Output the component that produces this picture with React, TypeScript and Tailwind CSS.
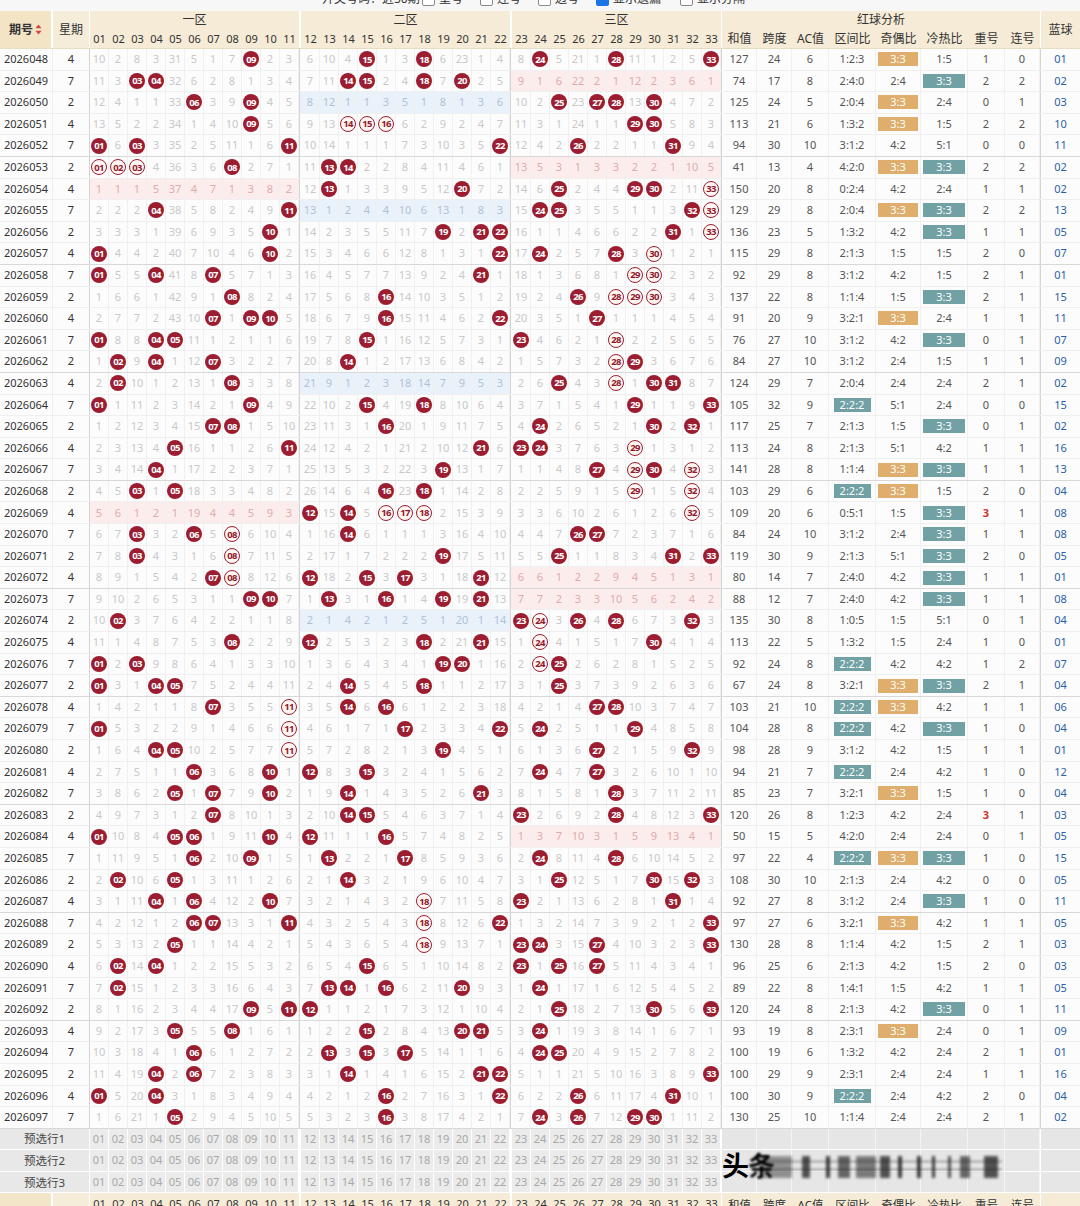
import React from 'react';

const INIT = [10, 2, 8, 3, 31, 5, 1, 7, 0, 2, 3, 6, 10, 4, 0, 1, 3, 0, 6, 23, 1, 4, 8, 0, 5, 21, 1, 0, 11, 1, 2, 5, 0];

const DRAWS: string[] = [
  '09 15 18 24 28 33',
  '03 04 14 15 18 20',
  '06 09 25 27 28 30',
  '09 14o 15o 16o 29 30',
  '01 03 11 22 26 31',
  '01o 02o 03o 08 13 14',
  '13 20 25 29 30 33o',
  '04 11 24 25 32 33o',
  '10 19 21 22 31 33o',
  '01 10 22 24 28 30o',
  '01 04 07 21 29o 30o',
  '08 16 26 28o 29o 30o',
  '07 09 10 16 22 27',
  '01 04 05 15 23 28o',
  '02 04 07 14 28o 29',
  '02 08 25 28o 30 31',
  '01 09 15 18 29 33',
  '07 08 16 24 30 32',
  '05 11 21 23 24 29o',
  '04 19 27 29o 30 32o',
  '03 05 16 18 29o 32o',
  '12 14 16o 17o 18o 32o',
  '03 06 08o 14 26 27',
  '03 08o 19 25 31 33',
  '07 08o 12 15 17 21',
  '09 10 13 16 19 21',
  '02 23 24o 26 28 32',
  '08 12 18 21 24o 30',
  '01 03 19 20 24o 25',
  '01 04 05 14 18 25',
  '07 11o 14 16 27 28',
  '01 11o 17 22 24 29',
  '04 05 11o 19 27 32',
  '06 10 12 15 24 27',
  '05 07 10 14 21 28',
  '07 14 15 23 28 33',
  '01 05 06 10 12 16',
  '06 09 13 17 24 28',
  '02 05 14 25 30 32',
  '04 06 10 18o 23 31',
  '06 07 11 18o 22 33',
  '05 18o 23 24 27 33',
  '02 04 15 23 25 27',
  '02 13 14 16 20 24',
  '09 11 12 25 30 33',
  '05 08 15 20 21 24',
  '06 13 15 17 24 25',
  '04 06 14 21 22 33',
  '01 04 16 22 26 31',
  '05 16 24 26 29 30',
];

const ANA: string[] = [
  '127 24 6 1:2:3 3:3 1:5 1 0 01',
  '74 17 8 2:4:0 2:4 3:3 2 2 02',
  '125 24 5 2:0:4 3:3 2:4 0 1 03',
  '113 21 6 1:3:2 3:3 1:5 2 2 10',
  '94 30 10 3:1:2 4:2 5:1 0 0 11',
  '41 13 4 4:2:0 3:3 3:3 2 2 02',
  '150 20 8 0:2:4 4:2 2:4 1 1 02',
  '129 29 8 2:0:4 3:3 3:3 2 2 13',
  '136 23 5 1:3:2 4:2 3:3 1 1 05',
  '115 29 8 2:1:3 1:5 1:5 2 0 07',
  '92 29 8 3:1:2 4:2 1:5 2 1 01',
  '137 22 8 1:1:4 1:5 3:3 2 1 15',
  '91 20 9 3:2:1 3:3 2:4 1 1 11',
  '76 27 10 3:1:2 4:2 3:3 0 1 07',
  '84 27 10 3:1:2 2:4 1:5 1 1 09',
  '124 29 7 2:0:4 2:4 2:4 2 1 02',
  '105 32 9 2:2:2 5:1 2:4 0 0 15',
  '117 25 7 2:1:3 1:5 3:3 0 1 02',
  '113 24 8 2:1:3 5:1 4:2 1 1 16',
  '141 28 8 1:1:4 3:3 3:3 1 1 13',
  '103 29 6 2:2:2 3:3 1:5 2 0 04',
  '109 20 6 0:5:1 1:5 3:3 3 1 08',
  '84 24 10 3:1:2 2:4 3:3 1 1 08',
  '119 30 9 2:1:3 5:1 3:3 2 0 05',
  '80 14 7 2:4:0 4:2 3:3 1 1 01',
  '88 12 7 2:4:0 4:2 3:3 1 1 08',
  '135 30 8 1:0:5 1:5 5:1 0 1 04',
  '113 22 5 1:3:2 1:5 2:4 1 0 01',
  '92 24 8 2:2:2 4:2 4:2 1 2 07',
  '67 24 8 3:2:1 3:3 3:3 2 1 04',
  '103 21 10 2:2:2 3:3 4:2 1 1 06',
  '104 28 8 2:2:2 4:2 3:3 1 0 04',
  '98 28 9 3:1:2 4:2 1:5 1 1 01',
  '94 21 7 2:2:2 2:4 4:2 1 0 12',
  '85 23 7 3:2:1 3:3 1:5 1 0 04',
  '120 26 8 1:2:3 4:2 2:4 3 1 03',
  '50 15 5 4:2:0 2:4 2:4 0 1 05',
  '97 22 4 2:2:2 3:3 3:3 1 0 15',
  '108 30 10 2:1:3 2:4 4:2 0 0 05',
  '92 27 8 3:1:2 2:4 3:3 1 0 11',
  '97 27 6 3:2:1 3:3 4:2 1 1 05',
  '130 28 8 1:1:4 4:2 1:5 2 1 03',
  '96 25 6 2:1:3 4:2 1:5 2 0 03',
  '89 22 8 1:4:1 1:5 4:2 1 1 05',
  '120 24 8 2:1:3 4:2 3:3 0 1 11',
  '93 19 8 2:3:1 3:3 2:4 0 1 09',
  '100 19 6 1:3:2 4:2 2:4 2 1 01',
  '100 29 9 2:3:1 2:4 2:4 1 1 16',
  '100 30 9 2:2:2 2:4 4:2 2 0 04',
  '130 25 10 1:1:4 2:4 2:4 2 1 02',
];

const WEEK = [4, 7, 2];
const ZONES = [
  [1, 2, 3, 4, 5, 6, 7, 8, 9, 10, 11],
  [12, 13, 14, 15, 16, 17, 18, 19, 20, 21, 22],
  [23, 24, 25, 26, 27, 28, 29, 30, 31, 32, 33],
];
const AW = ['w-[35px]', 'w-[35px]', 'w-[37px]', 'w-[47px]', 'w-[45px]', 'w-[47px]', 'w-[37px]', 'w-[35px]'];
const ALABELS = ['和值', '跨度', 'AC值', '区间比', '奇偶比', '冷热比', '重号', '连号'];

const pad = (n: number) => String(n).padStart(2, '0');

type Row = {
  issue: string;
  wk: number;
  balls: Set<number>;
  outl: Set<number>;
  om: number[];
  ana: string[];
};

function buildRows(): Row[] {
  const rows: Row[] = [];
  let prev = INIT;
  DRAWS.forEach((d, i) => {
    const balls = new Set<number>();
    const outl = new Set<number>();
    d.split(' ').forEach((t) => {
      const n = parseInt(t, 10);
      balls.add(n);
      if (t.endsWith('o')) outl.add(n);
    });
    const om = i === 0 ? INIT.slice() : prev.map((v, j) => (balls.has(j + 1) ? 0 : v + 1));
    prev = om;
    rows.push({ issue: String(2026048 + i), wk: WEEK[i % 3], balls, outl, om, ana: ANA[i].split(' ') });
  });
  return rows;
}

function Ball({ n, outline }: { n: number; outline: boolean }) {
  if (outline) {
    return (
      <span className="flex h-[16px] w-[16px] items-center justify-center rounded-full border border-[#9b1d2f] bg-[#fff5f3] text-[9.5px] font-bold leading-none tracking-[-0.6px] text-[#8f1a2b]">
        {pad(n)}
      </span>
    );
  }
  return (
    <span className="flex h-[16px] w-[16px] items-center justify-center rounded-full bg-[#9b1d2f] text-[9.5px] font-bold leading-none tracking-[-0.6px] text-white">
      {pad(n)}
    </span>
  );
}

function SortIcon() {
  return (
    <svg width="7" height="11" viewBox="0 0 7 11" className="ml-[2px]">
      <path d="M3.5 0.5 L6.5 4.2 L0.5 4.2 Z" fill="#d2453b" />
      <path d="M3.5 10.5 L6.5 6.8 L0.5 6.8 Z" fill="#d2453b" />
    </svg>
  );
}

function Checkbox({ checked, label, w }: { checked?: boolean; label: string; w: string }) {
  return (
    <div className={`flex items-center ${w}`}>
      {checked ? (
        <span className="h-[13px] w-[13px] rounded-[2px] bg-[#1a73e8]" />
      ) : (
        <span className="h-[13px] w-[13px] rounded-[2px] border border-[#8a8a8a] bg-white" />
      )}
      <span className="ml-[4px] text-[12px] text-[#333]">{label}</span>
    </div>
  );
}

function ZoneCells({ row, zi }: { row: Row; zi: number }) {
  const nums = ZONES[zi];
  const empty = nums.every((n) => !row.balls.has(n));
  let shade = 'text-[#c9c9c9]';
  if (empty) shade = zi === 1 ? 'bg-[#e9f1fb] text-[#b1c1d6]' : 'bg-[#fcecec] text-[#dcadad]';
  const wrap = zi === 0 ? 'border-l border-[#d3d3d3]' : 'border-l border-[#d3d3d3] pl-[1px]';
  return (
    <div className={`flex ${wrap} ${shade}`}>
      {nums.map((n) => (
        <div key={n} className="flex w-[19px] items-center justify-center border-r border-[#f0f0f0] text-[11px]">
          {row.balls.has(n) ? <Ball n={n} outline={row.outl.has(n)} /> : row.om[n - 1]}
        </div>
      ))}
    </div>
  );
}

function AnaCell({ k, v }: { k: number; v: string }) {
  let content: React.ReactNode = v;
  if (k === 3 && v === '2:2:2') {
    content = <span className="flex h-[14px] w-[37px] items-center justify-center bg-[#72a1a5] text-[11px] text-white">{v}</span>;
  } else if (k === 4 && v === '3:3') {
    content = <span className="flex h-[14px] w-[40px] items-center justify-center bg-[#dfae6c] text-[11px] text-white">{v}</span>;
  } else if (k === 5 && v === '3:3') {
    content = <span className="flex h-[14px] w-[42px] items-center justify-center bg-[#72a1a5] text-[11px] text-white">{v}</span>;
  } else if (k === 6 && v === '3') {
    content = <span className="font-bold text-[#d0302f]">{v}</span>;
  }
  return (
    <div className={`flex ${AW[k]} items-center justify-center border-r border-[#f0f0f0] text-[11px] text-[#555]`}>
      {content}
    </div>
  );
}

function BodyRow({ row, sep }: { row: Row; sep: boolean }) {
  const a = row.ana;
  return (
    <div className={`flex h-[21.6px] bg-[#fcfcfc] ${sep ? 'border-b border-[#d8d8d8]' : 'border-b border-[#efefef]'}`}>
      <div className="flex w-[53px] items-center justify-center border-r border-[#efefef] text-[11px] text-[#333]">{row.issue}</div>
      <div className="flex w-[36px] items-center justify-center text-[11px] text-[#333]">{row.wk}</div>
      <ZoneCells row={row} zi={0} />
      <ZoneCells row={row} zi={1} />
      <ZoneCells row={row} zi={2} />
      <div className="flex border-l border-[#d3d3d3]">
        {[0, 1, 2, 3, 4, 5, 6, 7].map((k) => (
          <AnaCell key={k} k={k} v={a[k]} />
        ))}
      </div>
      <div className="flex w-[40px] items-center justify-center border-l border-[#d3d3d3] text-[11px] text-[#2b5ea7]">{a[8]}</div>
    </div>
  );
}

function HeaderZone({ zi, title }: { zi: number; title: string }) {
  const wrap = zi === 0 ? 'border-l border-white' : 'border-l-2 border-white';
  return (
    <div className={`flex flex-col ${wrap}`}>
      <div className="flex h-[19px] w-[209px] items-center justify-center bg-[#f5ebd6] text-[12px] text-[#333]">{title}</div>
      <div className="flex h-[19px] bg-[#f5ebd6]">
        {ZONES[zi].map((n) => (
          <div key={n} className="flex w-[19px] items-center justify-center text-[11px] text-[#333]">
            {pad(n)}
          </div>
        ))}
      </div>
    </div>
  );
}

function FooterRow({ label }: { label: string }) {
  return (
    <div className="flex h-[21.6px] border-b border-white bg-[#ebebeb]">
      <div className="flex w-[89px] items-center justify-center bg-[#e8e8e8] text-[11.5px] text-[#444]">{label}</div>
      {[0, 1, 2].map((zi) => (
        <div key={zi} className={`flex ${zi === 0 ? 'border-l border-white' : 'border-l-2 border-white'}`}>
          {ZONES[zi].map((n) => (
            <div key={n} className="flex w-[19px] items-center justify-center border-r border-white text-[11px] text-[#a8a8a8]">
              {pad(n)}
            </div>
          ))}
        </div>
      ))}
      <div className="flex border-l border-white">
        {AW.map((w, k) => (
          <div key={k} className={`${w} border-r border-[#f4f4f4] bg-[#e6e6e6]`} />
        ))}
      </div>
      <div className="w-[40px] border-l border-white bg-[#e6e6e6]" />
    </div>
  );
}

function BottomHeader() {
  return (
    <div className="flex h-[21.6px] bg-white">
      <div className="w-[53px] border-r-2 border-white bg-[#f3e5c8]" />
      <div className="w-[36px] bg-[#f5ecda]" />
      {[0, 1, 2].map((zi) => (
        <div key={zi} className={`flex bg-[#f5ebd6] ${zi === 0 ? 'border-l border-white' : 'border-l-2 border-white'}`}>
          {ZONES[zi].map((n) => (
            <div key={n} className="flex w-[19px] items-center justify-center text-[11px] text-[#333]">
              {pad(n)}
            </div>
          ))}
        </div>
      ))}
      <div className="flex border-l border-white bg-[#f5ebd6]">
        {AW.map((w, k) => (
          <div key={k} className={`flex ${w} items-center justify-center text-[11.5px] text-[#333]`}>
            {ALABELS[k]}
          </div>
        ))}
      </div>
      <div className="w-[40px] border-l border-white bg-[#f5ebd6]" />
    </div>
  );
}

function Watermark() {
  const bars: [string, string, string][] = [
    ['left-[40px]', 'w-[30px]', 'opacity-40'],
    ['left-[80px]', 'w-[8px]', 'opacity-70'],
    ['left-[104px]', 'w-[4px]', 'opacity-80'],
    ['left-[116px]', 'w-[12px]', 'opacity-60'],
    ['left-[134px]', 'w-[20px]', 'opacity-50'],
    ['left-[158px]', 'w-[10px]', 'opacity-70'],
    ['left-[176px]', 'w-[4px]', 'opacity-80'],
    ['left-[195px]', 'w-[4px]', 'opacity-80'],
    ['left-[210px]', 'w-[3px]', 'opacity-80'],
    ['left-[226px]', 'w-[3px]', 'opacity-70'],
    ['left-[238px]', 'w-[10px]', 'opacity-60'],
    ['left-[262px]', 'w-[14px]', 'opacity-70'],
  ];
  return (
    <div className="pointer-events-none absolute left-[722px] top-[1150px] h-[34px] w-[290px]">
      <div className="absolute left-[40px] top-[10px] h-[3px] w-[240px] bg-[#555] opacity-30 blur-[1px]" />
      <div className="absolute left-[40px] top-[18px] h-[3px] w-[240px] bg-[#555] opacity-30 blur-[1px]" />
      <span className="absolute left-0 top-0 text-[27px] font-bold leading-[32px] text-black">头</span>
      <span className="absolute left-[26px] top-0 text-[27px] font-bold leading-[32px] text-black blur-[1px]">条</span>
      {bars.map(([l, w, o], i) => (
        <div key={i} className={`absolute top-[6px] h-[22px] ${l} ${w} ${o} bg-[#111] blur-[1.5px]`} />
      ))}
    </div>
  );
}

export default function App() {
  const rows = buildRows();
  return (
    <div className="relative w-[1080px] bg-white font-['Noto_Sans','Noto_Sans_CJK_SC',sans-serif]">
      {/* toolbar (cut off at the top edge) */}
      <div className="h-[11px] overflow-hidden bg-[#f7f7f7]">
        <div className="-mt-[10px] flex h-[18px] items-center pl-[322px]">
          <span className="w-[100px] text-[12px] text-[#333]">开奖号码：近50期</span>
          <Checkbox label="重号" w="w-[58px]" />
          <Checkbox label="连号" w="w-[58px]" />
          <Checkbox label="边号" w="w-[58px]" />
          <Checkbox checked label="显示遗漏" w="w-[84px]" />
          <Checkbox label="显示分隔" w="w-[80px]" />
        </div>
      </div>
      {/* header */}
      <div className="flex h-[38px] border-b border-[#e8dcc2] bg-white">
        <div className="flex w-[53px] items-center justify-center border-r-2 border-white bg-[#f3e4c6] text-[12px] font-bold text-[#333]">
          期号
          <SortIcon />
        </div>
        <div className="flex w-[36px] items-center justify-center bg-[#f5ecda] text-[12px] text-[#333]">星期</div>
        <HeaderZone zi={0} title="一区" />
        <HeaderZone zi={1} title="二区" />
        <HeaderZone zi={2} title="三区" />
        <div className="flex flex-col border-l border-white">
          <div className="flex h-[19px] w-[318px] items-center justify-center bg-[#f5ebd6] text-[12px] text-[#333]">红球分析</div>
          <div className="flex h-[19px] bg-[#f5ebd6]">
            {AW.map((w, k) => (
              <div key={k} className={`flex ${w} items-center justify-center text-[12px] text-[#333]`}>
                {ALABELS[k]}
              </div>
            ))}
          </div>
        </div>
        <div className="flex w-[40px] items-center justify-center border-l border-white bg-[#f5ebd6] text-[12px] text-[#333]">蓝球</div>
      </div>
      {/* body */}
      <div>
        {rows.map((r, i) => (
          <BodyRow key={r.issue} row={r} sep={i % 5 === 4} />
        ))}
      </div>
      {/* footer */}
      <FooterRow label="预选行1" />
      <FooterRow label="预选行2" />
      <FooterRow label="预选行3" />
      <BottomHeader />
      <Watermark />
    </div>
  );
}
